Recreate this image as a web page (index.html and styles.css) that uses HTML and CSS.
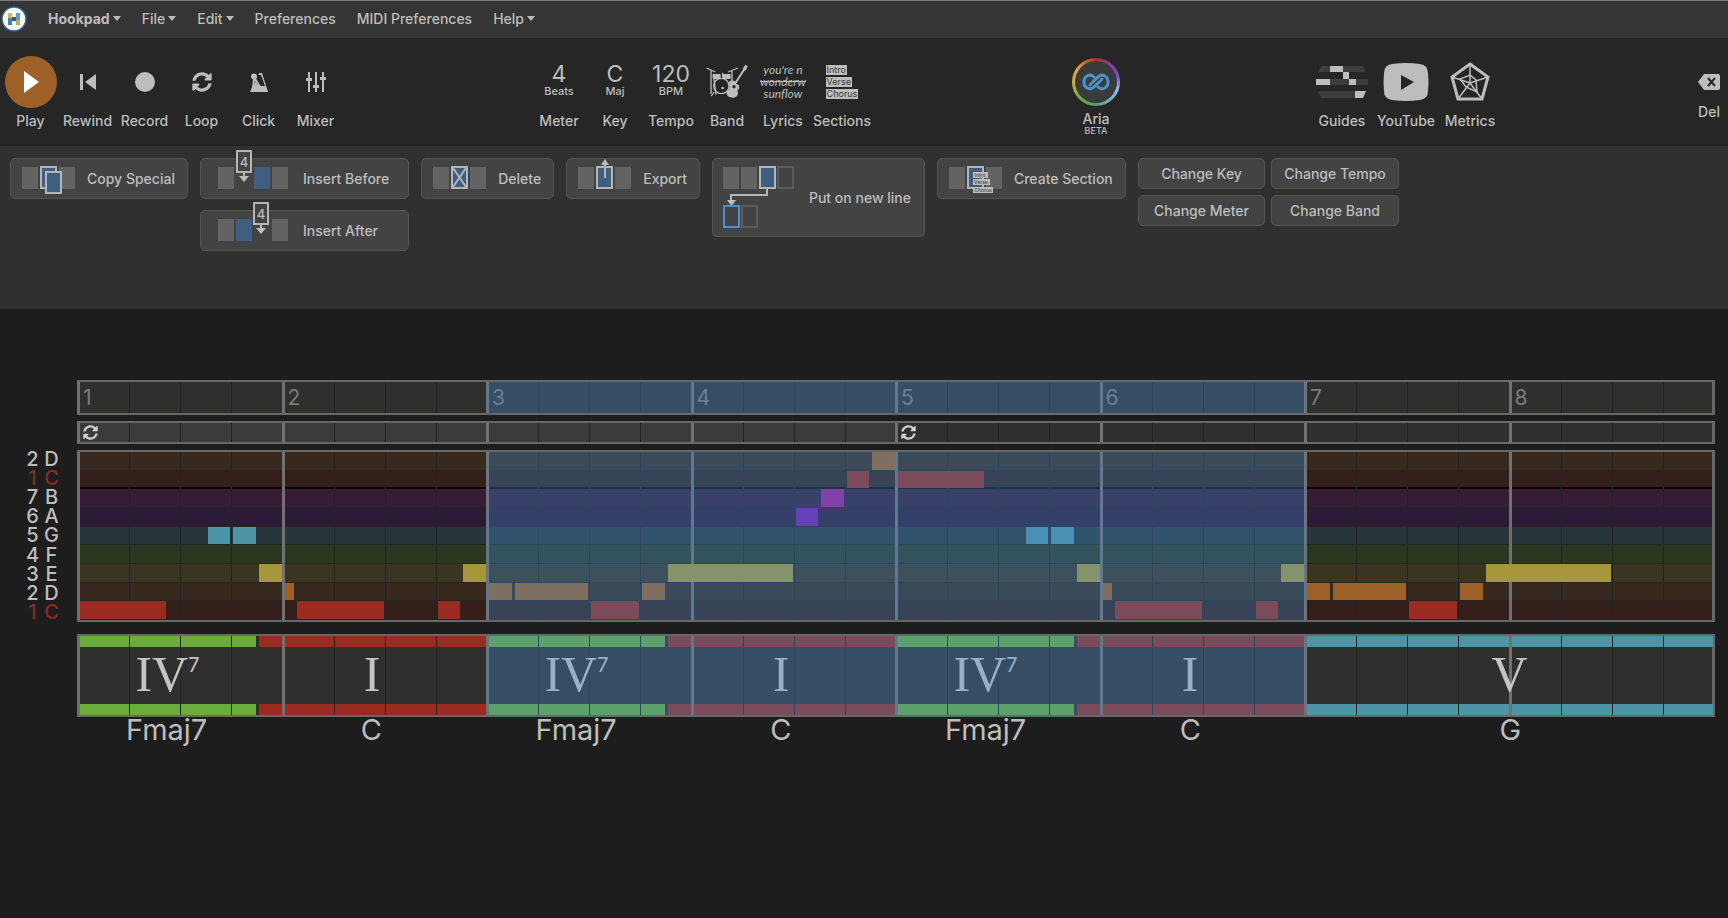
FILE: index.html
```html
<!DOCTYPE html>
<html lang="en">
<head>
    <meta charset="UTF-8">
    <meta name="viewport" content="width=device-width, initial-scale=1.0">
    <title>Hookpad</title>
    <link rel="stylesheet" href="styles.css">
</head>
<body>
    <nav class="menubar">
        <svg class="logo" viewBox="0 0 26 26">
            <circle cx="13" cy="13" r="12" fill="#f4f6f8" stroke="#2f6596" stroke-width="1.5"/>
            <rect x="7" y="7" width="4" height="5" fill="#d9b84a"/>
            <rect x="7" y="12" width="4" height="7" fill="#4a7db0"/>
            <rect x="11" y="11" width="5" height="4" fill="#35577f"/>
            <rect x="15" y="7" width="4" height="7" fill="#5b9bc4"/>
            <rect x="15" y="14" width="4" height="5" fill="#c9a94e"/>
        </svg>
        <button class="menu brand">Hookpad<i class="caret"></i></button>
        <button class="menu">File<i class="caret"></i></button>
        <button class="menu">Edit<i class="caret"></i></button>
        <button class="menu">Preferences</button>
        <button class="menu">MIDI Preferences</button>
        <button class="menu">Help<i class="caret"></i></button>
    </nav>

    <div class="toolbar">
        <div class="tools">
            <button class="tool">
                <span class="icon play"><svg width="18" height="24" viewBox="0 0 18 24"><path d="M2 1L17 12L2 23Z" fill="#fff"/></svg></span>
                Play
            </button>
            <button class="tool">
                <span class="icon"><svg width="18" height="18" viewBox="0 0 18 18"><path d="M1 1h3v16H1zM17 1v16L6 9z"/></svg></span>
                Rewind
            </button>
            <button class="tool">
                <span class="icon"><svg width="20" height="20" viewBox="0 0 20 20"><circle cx="10" cy="10" r="10"/></svg></span>
                Record
            </button>
            <button class="tool">
                <span class="icon"><svg width="20" height="20" viewBox="0 0 512 512"><use href="#loop"/></svg></span>
                Loop
            </button>
            <button class="tool">
                <span class="icon">
                    <svg width="18" height="20" viewBox="0 0 18 20">
                        <path d="M0 20L2.500 14H15L11 3L8.500 3L9 1H12L18 20Z"/>
                        <circle cx="4" cy="4.500" r="3"/>
                        <path d="M4 5L10 15M4 7L3 15" fill="none" stroke="#bdbdbd" stroke-width="2"/>
                        <path d="M5 9L8.500 14.500H4Z"/>
                    </svg>
                </span>
                Click
            </button>
            <button class="tool">
                <span class="icon">
                    <svg width="20" height="20" viewBox="0 0 20 20">
                        <path d="M2 0h2v20H2zM9 0h2v20H9zM16 0h2v20h-2zM0 6h6v3H0zM7 13h6v3H7zM14 5h6v3h-6z"/>
                    </svg>
                </span>
                Mixer
            </button>
        </div>

        <div class="tools">
            <button class="tool"><span class="icon value"><b>4</b><small>Beats</small></span>Meter</button>
            <button class="tool"><span class="icon value"><b>C</b><small>Maj</small></span>Key</button>
            <button class="tool"><span class="icon value"><b>120</b><small>BPM</small></span>Tempo</button>
            <button class="tool">
                <span class="icon">
                    <svg width="42" height="36" viewBox="0 0 126 108">
                        <g class="outline" stroke-width="4">
                            <path d="M1 12L28 24M66 24L96 12M15 18V90M78 18V56M22 30L30 92M50 26V40"/>
                            <circle cx="46" cy="66" r="23"/>
                            <path d="M24 84L16 96M66 84L74 96"/>
                            <path d="M84 64L116 14" stroke-width="6"/>
                        </g>
                        <rect x="20" y="30" width="24" height="15" rx="2"/>
                        <rect x="50" y="30" width="24" height="15" rx="2"/>
                        <path d="M110 14L118 2L125 7L119 20Z"/>
                        <path d="M70 52C82 46 90 52 90 60C102 60 102 74 94 80C102 96 84 104 74 100C62 98 58 84 66 78C74 74 68 60 70 52Z"/>
                        <circle cx="84" cy="68" r="5" fill="#262626"/>
                        <circle cx="50" cy="72" r="4"/>
                    </svg>
                </span>
                Band
            </button>
            <button class="tool">
                <span class="icon lyrics"><span>you're n</span><s>wonderw</s><span>sunflow</span></span>
                Lyrics
            </button>
            <button class="tool wide">
                <span class="icon sections"><span>Intro</span><span>Verse</span><span>Chorus</span></span>
                Sections
            </button>
        </div>

        <div class="tools">
            <button class="tool aria">
                <span class="icon">
                    <span class="ring">
                        <svg width="28" height="18" viewBox="0 0 28 18">
                            <g fill="none" stroke="#4a93cc" stroke-width="3" stroke-linecap="round">
                                <path d="M12 4C8 0 2 3 2 9C2 15 8 18 12 14L20 6"/>
                                <path d="M16 14C20 18 26 15 26 9C26 3 20 0 16 4L8 12"/>
                            </g>
                            <path d="M10 12L18 6" stroke="#3a3a3a" stroke-width="1"/>
                        </svg>
                    </span>
                </span>
                Aria<small>BETA</small>
            </button>
        </div>

        <div class="tools views">
            <button class="tool">
                <span class="icon">
                    <svg width="52" height="32" viewBox="0 0 52 32">
                        <path d="M5 0H47L50 6H2ZM0 13H52V19H0ZM2 25H50L47 32H5Z" fill="#3d3d3d"/>
                        <path d="M14 0H27V6H14ZM27 6H33V13H27ZM0 13H14V19H0ZM33 13H40V19H33ZM39 25H50L47 32H39Z"/>
                    </svg>
                </span>
                Guides
            </button>
            <button class="tool">
                <span class="icon">
                    <svg width="46" height="38" viewBox="0 0 46 38">
                        <path d="M9 1Q23 -1 37 1Q45 2 45 10Q46 19 45 28Q45 36 37 37Q23 39 9 37Q1 36 1 28Q0 19 1 10Q1 2 9 1Z"/>
                        <path d="M18 12L31 19L18 27Z" fill="#262626"/>
                    </svg>
                </span>
                YouTube
            </button>
            <button class="tool">
                <span class="icon">
                    <svg width="40" height="40" viewBox="0 0 40 40">
                        <g class="outline">
                            <path d="M20 2L38 15L32 37H8L2 15Z" stroke-width="3"/>
                            <path d="M20 2V21M38 15L20 21M32 37L20 21M8 37L20 21M2 15L20 21" stroke-width="1.500"/>
                            <path d="M20 13L26 18L27 30L16 25L10 17Z" stroke-width="1.500"/>
                        </g>
                    </svg>
                </span>
                Metrics
            </button>
        </div>

        <button class="tool del">
            <span class="icon">
                <svg width="22" height="16" viewBox="0 0 22 16">
                    <path d="M6 0H20Q22 0 22 2V14Q22 16 20 16H6L0 8Z"/>
                    <path d="M10 4L17 12M17 4L10 12" stroke="#262626" stroke-width="2"/>
                </svg>
            </span>
            Del
        </button>
    </div>

    <div class="ribbon">
        <button class="action">
            <svg width="53" height="39" viewBox="0 0 53 39">
                <path class="block" d="M0 8h16v22H0zM37 8h16v22H37z"/>
                <rect class="picked" x="19" y="8" width="15" height="21"/>
                <rect class="picked" x="24" y="13" width="15" height="21"/>
            </svg>
            Copy Special
        </button>
        <div class="stack">
            <button class="action insert">
                <svg width="70" height="39" viewBox="0 0 70 39">
                    <path class="block" d="M0 8h16v22H0zM54 8h16v22H54z"/>
                    <rect class="blue" x="36" y="8" width="16" height="22"/>
                    <path class="stem" d="M26 13V18"/>
                    <path class="tip" d="M21 17h10l-5 6z"/>
                    <rect class="tag" x="19" y="-8" width="14" height="21"/>
                    <text x="26" y="8">4</text>
                </svg>
                Insert Before
            </button>
            <button class="action insert">
                <svg width="70" height="39" viewBox="0 0 70 39">
                    <path class="block" d="M0 8h16v22H0zM54 8h16v22H54z"/>
                    <rect class="blue" x="18" y="8" width="16" height="22"/>
                    <path class="stem" d="M43 13V18"/>
                    <path class="tip" d="M38 17h10l-5 6z"/>
                    <rect class="tag" x="36" y="-8" width="14" height="21"/>
                    <text x="43" y="8">4</text>
                </svg>
                Insert After
            </button>
        </div>
        <button class="action">
            <svg width="53" height="39" viewBox="0 0 53 39">
                <path class="block" d="M0 8h16v22H0zM37 8h16v22H37z"/>
                <rect class="picked" x="19" y="8" width="15" height="21"/>
                <path class="stem" d="M20 9L33 28M33 9L20 28"/>
            </svg>
            Delete
        </button>
        <button class="action">
            <svg width="53" height="39" viewBox="0 0 53 39">
                <path class="block" d="M0 8h16v22H0zM37 8h16v22H37z"/>
                <rect class="picked" x="19" y="8" width="15" height="21"/>
                <path class="stem" d="M27 19V5"/>
                <path class="tip" d="M23 6h8l-4-6z"/>
            </svg>
            Export
        </button>
        <button class="action newline">
            <svg width="71" height="77" viewBox="0 0 71 77">
                <path class="block" d="M0 8h16v22H0zM18 8h16v22H18z"/>
                <rect class="picked" x="37" y="8" width="15" height="21"/>
                <rect class="empty" x="55" y="8" width="15" height="21"/>
                <path class="stem" d="M44 30V36H8V41"/>
                <path class="tip" d="M4 41h9l-4.500 6z"/>
                <rect class="target" x="1" y="47" width="15" height="21"/>
                <rect class="empty" x="19" y="47" width="15" height="21"/>
            </svg>
            Put on new line
        </button>
        <button class="action">
            <svg width="53" height="39" viewBox="0 0 53 39">
                <path class="block" d="M0 8h16v22H0zM37 8h16v22H37z"/>
                <rect class="picked" x="19" y="8" width="15" height="21"/>
                <path class="label" d="M24 13h15v6H24zM24 20h17v6H24zM24 28h20v6H24z"/>
                <text class="mini" x="31" y="18">Intro</text>
                <text class="mini" x="32" y="25">Verse</text>
                <text class="mini" x="34" y="33">Chorus</text>
            </svg>
            Create Section
        </button>
        <div class="changes">
            <button class="action small">Change Key</button>
            <button class="action small">Change Tempo</button>
            <button class="action small">Change Meter</button>
            <button class="action small">Change Band</button>
        </div>
    </div>

    <main class="score">
        <div class="track ruler">
            <div class="lines"></div>
            <div class="cells numbers"></div>
            <div class="cells"><div class="selection"></div></div>
        </div>
        <div class="track loops">
            <div class="cells"><div class="looped"></div></div>
            <div class="lines"></div>
            <div class="cells marks">
                <svg class="mark first" viewBox="0 0 512 512"><use href="#loop"/></svg>
                <svg class="mark second" viewBox="0 0 512 512"><use href="#loop"/></svg>
            </div>
        </div>
        <div class="keys">
            <div><span>2</span><span>D</span></div>
            <div class="tonic"><span>1</span><span>C</span></div>
            <div><span>7</span><span>B</span></div>
            <div><span>6</span><span>A</span></div>
            <div><span>5</span><span>G</span></div>
            <div><span>4</span><span>F</span></div>
            <div><span>3</span><span>E</span></div>
            <div><span>2</span><span>D</span></div>
            <div class="tonic"><span>1</span><span>C</span></div>
        </div>
        <div class="track roll">
            <div class="rows">
                <div class="row-d"></div>
                <div class="row-c octave"></div>
                <div class="row-b"></div>
                <div class="row-a"></div>
                <div class="row-g"></div>
                <div class="row-f"></div>
                <div class="row-e"></div>
                <div class="row-d"></div>
                <div class="row-c"></div>
            </div>
            <div class="lines"></div>
            <div class="cells notes"></div>
            <div class="cells"><div class="selection"></div></div>
        </div>
        <div class="track chords">
            <div class="cells strips"></div>
            <div class="lines"></div>
            <div class="cells romans"></div>
            <div class="cells"><div class="selection"></div></div>
        </div>
        <div class="names"></div>
    </main>

    <svg width="0" height="0" class="defs">
        <path id="loop" d="M370.72 133.28C339.458 104.008 298.888 87.962 255.848 88c-77.458.068-144.328 53.178-162.791 126.85-1.344 5.363-6.122 9.15-11.651 9.15H24.103c-7.498 0-13.194-6.807-11.807-14.176C33.933 94.924 134.813 8 256 8c66.448 0 126.791 26.136 171.315 68.685L463.03 40.97C478.149 25.851 504 36.559 504 57.941V192c0 13.255-10.745 24-24 24H345.941c-21.382 0-32.09-25.851-16.971-40.971l41.75-41.749zM32 296h134.059c21.382 0 32.09 25.851 16.971 40.971l-41.75 41.75c31.262 29.273 71.835 45.319 114.876 45.28 77.418-.07 144.315-53.144 162.787-126.849 1.344-5.363 6.122-9.15 11.651-9.15h57.304c7.498 0 13.194 6.807 11.807 14.176C478.067 417.076 377.187 504 256 504c-66.448 0-126.791-26.136-171.315-68.685L48.97 471.03C33.851 486.149 8 475.441 8 454.059V320c0-13.255 10.745-24 24-24z"/>
    </svg>

    <script src="score.js"></script>
</body>
</html>
```
FILE: styles.css
```css
* {
    box-sizing: border-box;
}
body {
    margin: 0;
    background: #1d1d1d;
    color: #bdbdbd;
    font-family: Inter, "Liberation Sans", sans-serif;
    font-size: 14px;
    font-weight: 500;
}
button {
    margin: 0;
    padding: 0;
    border: 0;
    background: none;
    color: inherit;
    font: inherit;
    white-space: nowrap;
}
svg {
    display: block;
    flex: none;
    fill: #bdbdbd;
    overflow: visible;
}
.outline {
    fill: none;
    stroke: #bdbdbd;
}
.defs {
    position: absolute;
}

/* menu bar */
.menubar {
    display: flex;
    align-items: center;
    gap: 21px;
    height: 38px;
    padding: 0 0 2px 1px;
    border-top: 1px solid #7b7b7b;
    background: #353535;
}
.logo {
    width: 26px;
    height: 26px;
}
.menu {
    display: flex;
    align-items: center;
    gap: 3px;
}
.brand {
    font-weight: 700;
}
.caret {
    border: 4px solid transparent;
    border-top: 5px solid #bdbdbd;
    border-bottom: 0;
}

/* toolbar */
.toolbar {
    display: grid;
    grid-template-columns: 531fr 537fr 242fr 380fr 38px;
    align-items: start;
    height: 108px;
    padding-top: 18px;
    background: #262626;
    border-bottom: 1px solid #222;
}
.tools {
    display: flex;
}
.tools:first-child {
    padding-left: 2px;
}
.tool {
    display: flex;
    flex-direction: column;
    align-items: center;
    width: 57px;
    line-height: 18px;
}
.tools + .tools .tool {
    width: 56px;
}
.tools + .tools .wide {
    width: 62px;
}
.tools.views .tool {
    width: 64px;
}
.icon {
    display: flex;
    flex-direction: column;
    align-items: center;
    justify-content: center;
    height: 52px;
    margin-bottom: 4px;
}
.play {
    width: 52px;
    border-radius: 50%;
    background: #9d6128;
}
.value b {
    font-size: 23px;
    font-weight: 400;
    line-height: 18px;
}
.value small {
    font-size: 11px;
    line-height: 16px;
}
.lyrics {
    font: italic 12px/12px Lato, sans-serif;
}
.sections {
    align-items: flex-start;
    gap: 2px;
}
.sections span {
    padding: 0 1px;
    background: #bdbdbd;
    color: #3a3a3a;
    font-size: 9px;
    font-weight: 400;
    line-height: 10px;
}
.ring {
    display: flex;
    align-items: center;
    justify-content: center;
    width: 48px;
    height: 48px;
    border: 3px solid transparent;
    border-radius: 50%;
    background: linear-gradient(#3a3a3a, #3a3a3a) padding-box,
        conic-gradient(#b03020, #8040b0 12%, #7a50c0 20%, #8fbbe0 30%, #7fb0d0 38%, #4fa06a 50%, #6aad3a 62%, #d0b040 75%, #d9a040 85%, #b03020) border-box;
}
.tool.aria .icon {
    margin-bottom: 2px;
}
.aria small {
    font-size: 9px;
    line-height: 5px;
}
.del {
    width: 38px;
}
.del .icon {
    height: 43px;
    padding-top: 9px;
}

/* ribbon */
.ribbon {
    display: flex;
    align-items: flex-start;
    gap: 12px;
    height: 163px;
    padding: 12px 10px;
    background: #30302f;
}
.action {
    display: flex;
    align-items: center;
    gap: 12px;
    height: 41px;
    padding: 0 12px 0 11px;
    border: 1px solid #555;
    border-radius: 5px;
    background: #434343;
}
.stack {
    display: flex;
    flex-direction: column;
    gap: 11px;
}
.insert {
    gap: 15px;
    padding: 0 19px 0 17px;
}
.newline {
    height: 79px;
    gap: 15px;
    padding: 0 13px 0 10px;
}
.changes {
    display: grid;
    grid-template-columns: 1fr 1fr;
    gap: 6px;
}
.small {
    justify-content: center;
    height: 31px;
    padding: 0 12px;
}
.block {
    fill: #636363;
}
.blue {
    fill: #3f5f80;
}
.picked {
    fill: #3f5f80;
    stroke: #b5b5b5;
    stroke-width: 2;
}
.empty {
    fill: none;
    stroke: #5c5c5c;
    stroke-width: 2;
}
.target {
    fill: none;
    stroke: #4a8fd0;
    stroke-width: 2;
}
.tag {
    fill: #434343;
    stroke: #b5b5b5;
    stroke-width: 2;
}
.stem {
    fill: none;
    stroke: #b5b5b5;
    stroke-width: 2;
}
.action text {
    font-size: 13px;
    text-anchor: middle;
}
.action .mini {
    font-size: 5px;
    fill: #444;
}

/* score: 8 bars, 16 columns each */
.score {
    display: grid;
    grid-template-columns: 77px 1fr;
    row-gap: 6px;
    padding: 71px 13px 0 0;
}
.track {
    grid-column: 2;
    position: relative;
    border: 2px solid #686868;
    border-width: 2px 3px;
    background: #2f2f2e;
}
.ruler {
    height: 35px;
}
.loops {
    height: 23px;
}
.roll {
    height: 172px;
}
.chords {
    height: 83px;
    margin-top: 6px;
}
.cells,
.lines,
.rows {
    position: absolute;
    inset: 0;
    display: grid;
}
/* bar lines are centred on the track's side borders */
.cells,
.lines {
    inset: 0 -2px;
}
.cells {
    grid-template-columns: repeat(128, minmax(0, 1fr));
}
.lines {
    grid-template-columns: repeat(32, 1fr);
}
.lines i {
    border-left: 1px solid #232323;
}
.lines i:nth-child(4n + 1) {
    margin-left: -1px;
    border-left: 3px solid #717171;
}
.selection {
    grid-column: 33 / 97;
    background: rgba(68, 139, 206, 0.34);
}
.numbers span {
    padding-left: 5px;
    color: #7b7b7b;
    font-size: 21px;
    font-weight: 400;
    line-height: 31px;
}
.looped {
    grid-column: 1 / 65;
    background: #3b3b3b;
}
.marks {
    align-items: center;
}
.mark {
    width: 15px;
    height: 15px;
    margin-left: 5px;
    fill: #cfcfcf;
}
.first {
    grid-column: 1 / 3;
}
.second {
    grid-column: 65 / 67;
}
.keys {
    display: grid;
    grid-template-rows: repeat(9, 1fr);
    font-size: 20px;
    line-height: 19px;
}
.keys div {
    display: grid;
    grid-template-columns: 12px 16px;
    justify-content: center;
    justify-items: center;
    gap: 5px;
    padding-left: 9px;
}
.tonic {
    color: #862d22;
}
.rows {
    grid-template-rows: repeat(9, 1fr);
}
.rows div {
    border-bottom: 1px solid #242424;
}
.rows .octave {
    border-bottom: 2px solid #0b0508;
}
.row-d { background: #38291e; }
.row-c { background: #351f1c; }
.row-b { background: #361c34; }
.row-a { background: #2c1b36; }
.row-g { background: #28363b; }
.row-f { background: #293821; }
.row-e { background: #393520; }
.notes {
    grid-template-rows: repeat(9, 1fr);
}
.note {
    margin: 0 1px 1px 2px;
}
.note-c { background: #992b20; }
.note-d { background: #9d6128; }
.note-e { background: #a6983a; }
.note-f { background: #6aad3a; }
.note-g { background: #4d94a7; }
.note-a { background: #761ab4; }
.note-b { background: #a21e94; }
.strips {
    grid-template-rows: 11px 1fr 11px;
}
.strip {
    margin: 0 1px 0 2px;
}
.top {
    grid-row: 1;
}
.bottom {
    grid-row: 3;
}
.romans {
    justify-items: center;
    align-items: center;
}
.roman {
    display: flex;
    align-items: flex-start;
    padding-bottom: 4px;
    color: #c4c4c4;
    font-family: "Liberation Serif", serif;
    font-size: 50px;
    font-weight: 400;
    line-height: 50px;
}
.roman sup {
    font: 20px/32px Inter, sans-serif;
}
.names {
    grid-column: 2;
    display: grid;
    grid-template-columns: repeat(128, minmax(0, 1fr));
    justify-items: center;
    margin-top: -11px;
    font-size: 29px;
    font-weight: 400;
    line-height: 36px;
}
```
FILE: score.js
```js
// [pitch, row, first sixteenth, length]
var notes = [
    ["c", 9, 0, 7], ["g", 5, 10, 2], ["g", 5, 12, 2], ["e", 7, 14, 2],
    ["d", 8, 16, 1], ["c", 9, 17, 7], ["c", 9, 28, 2], ["e", 7, 30, 2],
    ["d", 8, 32, 2], ["d", 8, 34, 6], ["c", 9, 40, 4], ["d", 8, 44, 2], ["e", 7, 46, 10],
    ["a", 4, 56, 2], ["b", 3, 58, 2], ["c", 2, 60, 2], ["d", 1, 62, 2],
    ["c", 2, 64, 7], ["g", 5, 74, 2], ["g", 5, 76, 2], ["e", 7, 78, 2],
    ["d", 8, 80, 1], ["c", 9, 81, 7], ["c", 9, 92, 2], ["e", 7, 94, 2],
    ["d", 8, 96, 2], ["d", 8, 98, 6], ["c", 9, 104, 4], ["d", 8, 108, 2], ["e", 7, 110, 10]
];
// [roman, extension, name, colour, first sixteenth, length]
var chords = [
    ["IV", "7", "Fmaj7", "f", 0, 14], ["I", "", "C", "c", 14, 18],
    ["IV", "7", "Fmaj7", "f", 32, 14], ["I", "", "C", "c", 46, 18],
    ["IV", "7", "Fmaj7", "f", 64, 14], ["I", "", "C", "c", 78, 18],
    ["V", "", "G", "g", 96, 32]
];

function add(parent, tag, className, start, length) {
    var el = document.createElement(tag);
    el.className = className;
    el.style.gridColumn = (start + 1) + " / span " + length;
    parent.appendChild(el);
    return el;
}

document.querySelectorAll(".lines").forEach(function (lines) {
    for (var i = 0; i < 32; i++) {
        lines.appendChild(document.createElement("i"));
    }
});

var numbers = document.querySelector(".numbers");
for (var bar = 0; bar < 8; bar++) {
    add(numbers, "span", "", bar * 16, 16).textContent = bar + 1;
}

var roll = document.querySelector(".notes");
notes.forEach(function (n) {
    add(roll, "div", "note note-" + n[0], n[2], n[3]).style.gridRow = n[1];
});

var strips = document.querySelector(".strips");
var romans = document.querySelector(".romans");
var names = document.querySelector(".names");
chords.forEach(function (c) {
    add(strips, "div", "strip top note-" + c[3], c[4], c[5]);
    add(strips, "div", "strip bottom note-" + c[3], c[4], c[5]);
    var roman = add(romans, "div", "roman", c[4], c[5]);
    roman.textContent = c[0];
    if (c[1]) {
        var sup = document.createElement("sup");
        sup.textContent = c[1];
        roman.appendChild(sup);
    }
    add(names, "span", "", c[4], c[5]).textContent = c[2];
});
```
